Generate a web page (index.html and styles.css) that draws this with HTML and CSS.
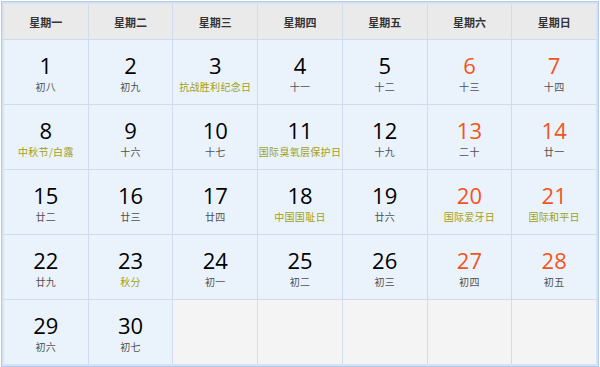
FILE: index.html
```html
<!DOCTYPE html>
<html lang="zh-CN">
<head>
<meta charset="utf-8">
<link rel="stylesheet" href="styles.css">
</head>
<body>
<div class="cal">
  <div class="grid">
    <div class="hd">星期一</div><div class="hd">星期二</div><div class="hd">星期三</div><div class="hd">星期四</div><div class="hd">星期五</div><div class="hd">星期六</div><div class="hd">星期日</div>

    <div class="day"><span class="num">1</span><span class="lunar">初八</span></div>
    <div class="day"><span class="num">2</span><span class="lunar">初九</span></div>
    <div class="day"><span class="num">3</span><span class="lunar fest">抗战胜利纪念日</span></div>
    <div class="day"><span class="num">4</span><span class="lunar">十一</span></div>
    <div class="day"><span class="num">5</span><span class="lunar">十二</span></div>
    <div class="day we"><span class="num">6</span><span class="lunar">十三</span></div>
    <div class="day we"><span class="num">7</span><span class="lunar">十四</span></div>

    <div class="day"><span class="num">8</span><span class="lunar fest">中秋节/白露</span></div>
    <div class="day"><span class="num">9</span><span class="lunar">十六</span></div>
    <div class="day"><span class="num">10</span><span class="lunar">十七</span></div>
    <div class="day"><span class="num">11</span><span class="lunar fest">国际臭氧层保护日</span></div>
    <div class="day"><span class="num">12</span><span class="lunar">十九</span></div>
    <div class="day we"><span class="num">13</span><span class="lunar">二十</span></div>
    <div class="day we"><span class="num">14</span><span class="lunar">廿一</span></div>

    <div class="day"><span class="num">15</span><span class="lunar">廿二</span></div>
    <div class="day"><span class="num">16</span><span class="lunar">廿三</span></div>
    <div class="day"><span class="num">17</span><span class="lunar">廿四</span></div>
    <div class="day"><span class="num">18</span><span class="lunar fest">中国国耻日</span></div>
    <div class="day"><span class="num">19</span><span class="lunar">廿六</span></div>
    <div class="day we"><span class="num">20</span><span class="lunar fest">国际爱牙日</span></div>
    <div class="day we"><span class="num">21</span><span class="lunar fest">国际和平日</span></div>

    <div class="day"><span class="num">22</span><span class="lunar">廿九</span></div>
    <div class="day"><span class="num">23</span><span class="lunar fest">秋分</span></div>
    <div class="day"><span class="num">24</span><span class="lunar">初一</span></div>
    <div class="day"><span class="num">25</span><span class="lunar">初二</span></div>
    <div class="day"><span class="num">26</span><span class="lunar">初三</span></div>
    <div class="day we"><span class="num">27</span><span class="lunar">初四</span></div>
    <div class="day we"><span class="num">28</span><span class="lunar">初五</span></div>

    <div class="day"><span class="num">29</span><span class="lunar">初六</span></div>
    <div class="day"><span class="num">30</span><span class="lunar">初七</span></div>
    <div class="empty"></div>
    <div class="empty"></div>
    <div class="empty"></div>
    <div class="empty"></div>
    <div class="empty"></div>
  </div>
</div>
</body>
</html>
```
FILE: styles.css
```css
html, body {
  margin: 0;
  padding: 0;
  background: #ffffff;
}
body {
  width: 600px;
  height: 367px;
  overflow: hidden;
  font-family: "Open Sans", "Noto Sans CJK SC", sans-serif;
}
.cal {
  margin: 1px 1px 0 1px;
  border: 1px solid #b3c9e8;
  padding: 2px;
  background: #d5e3f5;
}
.grid {
  display: grid;
  grid-template-columns: repeat(7, 1fr);
  grid-template-rows: 35px repeat(5, 64px);
  gap: 1px;
  background: #d0dcee;
}
.hd {
  background: #eaeaea;
  display: flex;
  align-items: center;
  justify-content: center;
  font-family: "Noto Sans CJK SC", sans-serif;
  font-size: 11px;
  font-weight: bold;
  color: #333333;
}
.day {
  background: #eaf3fb;
  display: flex;
  flex-direction: column;
  align-items: center;
  padding-top: 12px;
  box-sizing: border-box;
}
.empty {
  background: #f4f4f4;
}
.num {
  font-family: "Open Sans", sans-serif;
  font-size: 22px;
  font-weight: 500;
  line-height: 26px;
  color: #000000;
}
.we .num {
  color: #f4541b;
}
.lunar {
  margin-top: 2px;
  font-family: "Noto Sans CJK SC", sans-serif;
  font-size: 10px;
  line-height: 14px;
  letter-spacing: 0.3px;
  color: #505050;
  white-space: nowrap;
}
.lunar.fest {
  color: #a0a018;
}
```
